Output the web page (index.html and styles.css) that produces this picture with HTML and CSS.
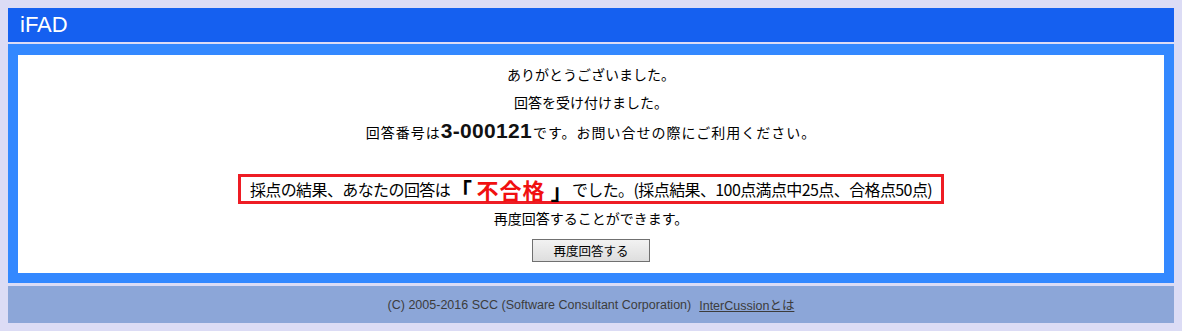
FILE: index.html
```html
<!DOCTYPE html>
<html lang="ja">
<head>
<meta charset="utf-8">
<title>iFAD</title>
<link rel="stylesheet" href="styles.css">
</head>
<body>
<div class="header"><span class="logo">iFAD</span></div>
<div class="main">
  <div class="content">
    <div class="line">ありがとうございました。</div>
    <div class="line">回答を受け付けました。</div>
    <div class="line line-num">回答番号は<span class="num">3-000121</span>です。お問い合せの際にご利用ください。</div>
    <div class="spacer"></div>
    <div class="result-row">
      <div class="result">採点の結果、あなたの回答は<span class="bracket">「</span><span class="fail">不合格</span><span class="bracket">」</span>でした。(採点結果、100点満点中25点、合格点50点)</div>
    </div>
    <div class="line">再度回答することができます。</div>
    <div class="btn-row"><button class="btn" type="button">再度回答する</button></div>
  </div>
</div>
<div class="footer">
  <span class="copy">(C) 2005-2016 SCC (Software Consultant Corporation)</span>
  <a class="about" href="#">InterCussionとは</a>
</div>
</body>
</html>
```

FILE: styles.css
```css
html {
  background: #dcdcf5;
}
body {
  margin: 8px;
  background: #dcdcf5;
  font-family: "Noto Sans CJK JP", "Liberation Sans", sans-serif;
  color: #000;
}
.header {
  height: 34px;
  background: #1560f0;
  display: flex;
  align-items: center;
  padding-left: 12px;
}
.logo {
  color: #fff;
  font-family: "Liberation Sans", "Noto Sans", sans-serif;
  font-size: 22px;
  line-height: 1;
}
.main {
  margin-top: 2px;
  background: #3388ff;
  padding: 11px 10px 10px 10px;
}
.content {
  background: #fff;
  height: 218px;
  box-sizing: border-box;
  padding-top: 5px;
  text-align: center;
}
.line {
  height: 28px;
  line-height: 28px;
  font-size: 14px;
}
.line-num {
  height: 29px;
  line-height: 29px;
  letter-spacing: 1px;
}
.num {
  font-family: "Liberation Sans", sans-serif;
  font-weight: bold;
  font-size: 21px;
  letter-spacing: 0.3px;
  color: #111;
  margin-right: 1px;
}
.spacer {
  height: 29px;
}
.result-row {
  display: flex;
  justify-content: center;
}
.result {
  height: 24px;
  line-height: 24px;
  border: 3px solid #ee1c24;
  padding: 0 9px;
  font-size: 16px;
  letter-spacing: -0.6px;
  white-space: nowrap;
  display: flex;
  align-items: center;
}
.bracket {
  font-size: 22px;
  font-weight: bold;
}
.fail {
  color: #f01010;
  font-weight: bold;
  font-size: 22px;
  letter-spacing: 1px;
  padding: 0 5px;
}
.btn-row {
  padding-top: 5px;
}
.btn {
  width: 118px;
  height: 23px;
  border: 1px solid #707070;
  border-radius: 0;
  background: linear-gradient(#f2f2f2, #dedede);
  font-family: "Noto Sans CJK JP", sans-serif;
  font-size: 12.5px;
  color: #000;
  padding: 0;
  line-height: 21px;
}
.footer {
  margin-top: 3px;
  height: 37px;
  background: #8ca6d8;
  display: flex;
  align-items: center;
  justify-content: center;
  gap: 8px;
  font-family: "Liberation Sans", "Noto Sans CJK JP", sans-serif;
  font-size: 12.5px;
  color: #3c3c3c;
}
.about {
  color: #3c3c3c;
  text-decoration: underline;
}
```
